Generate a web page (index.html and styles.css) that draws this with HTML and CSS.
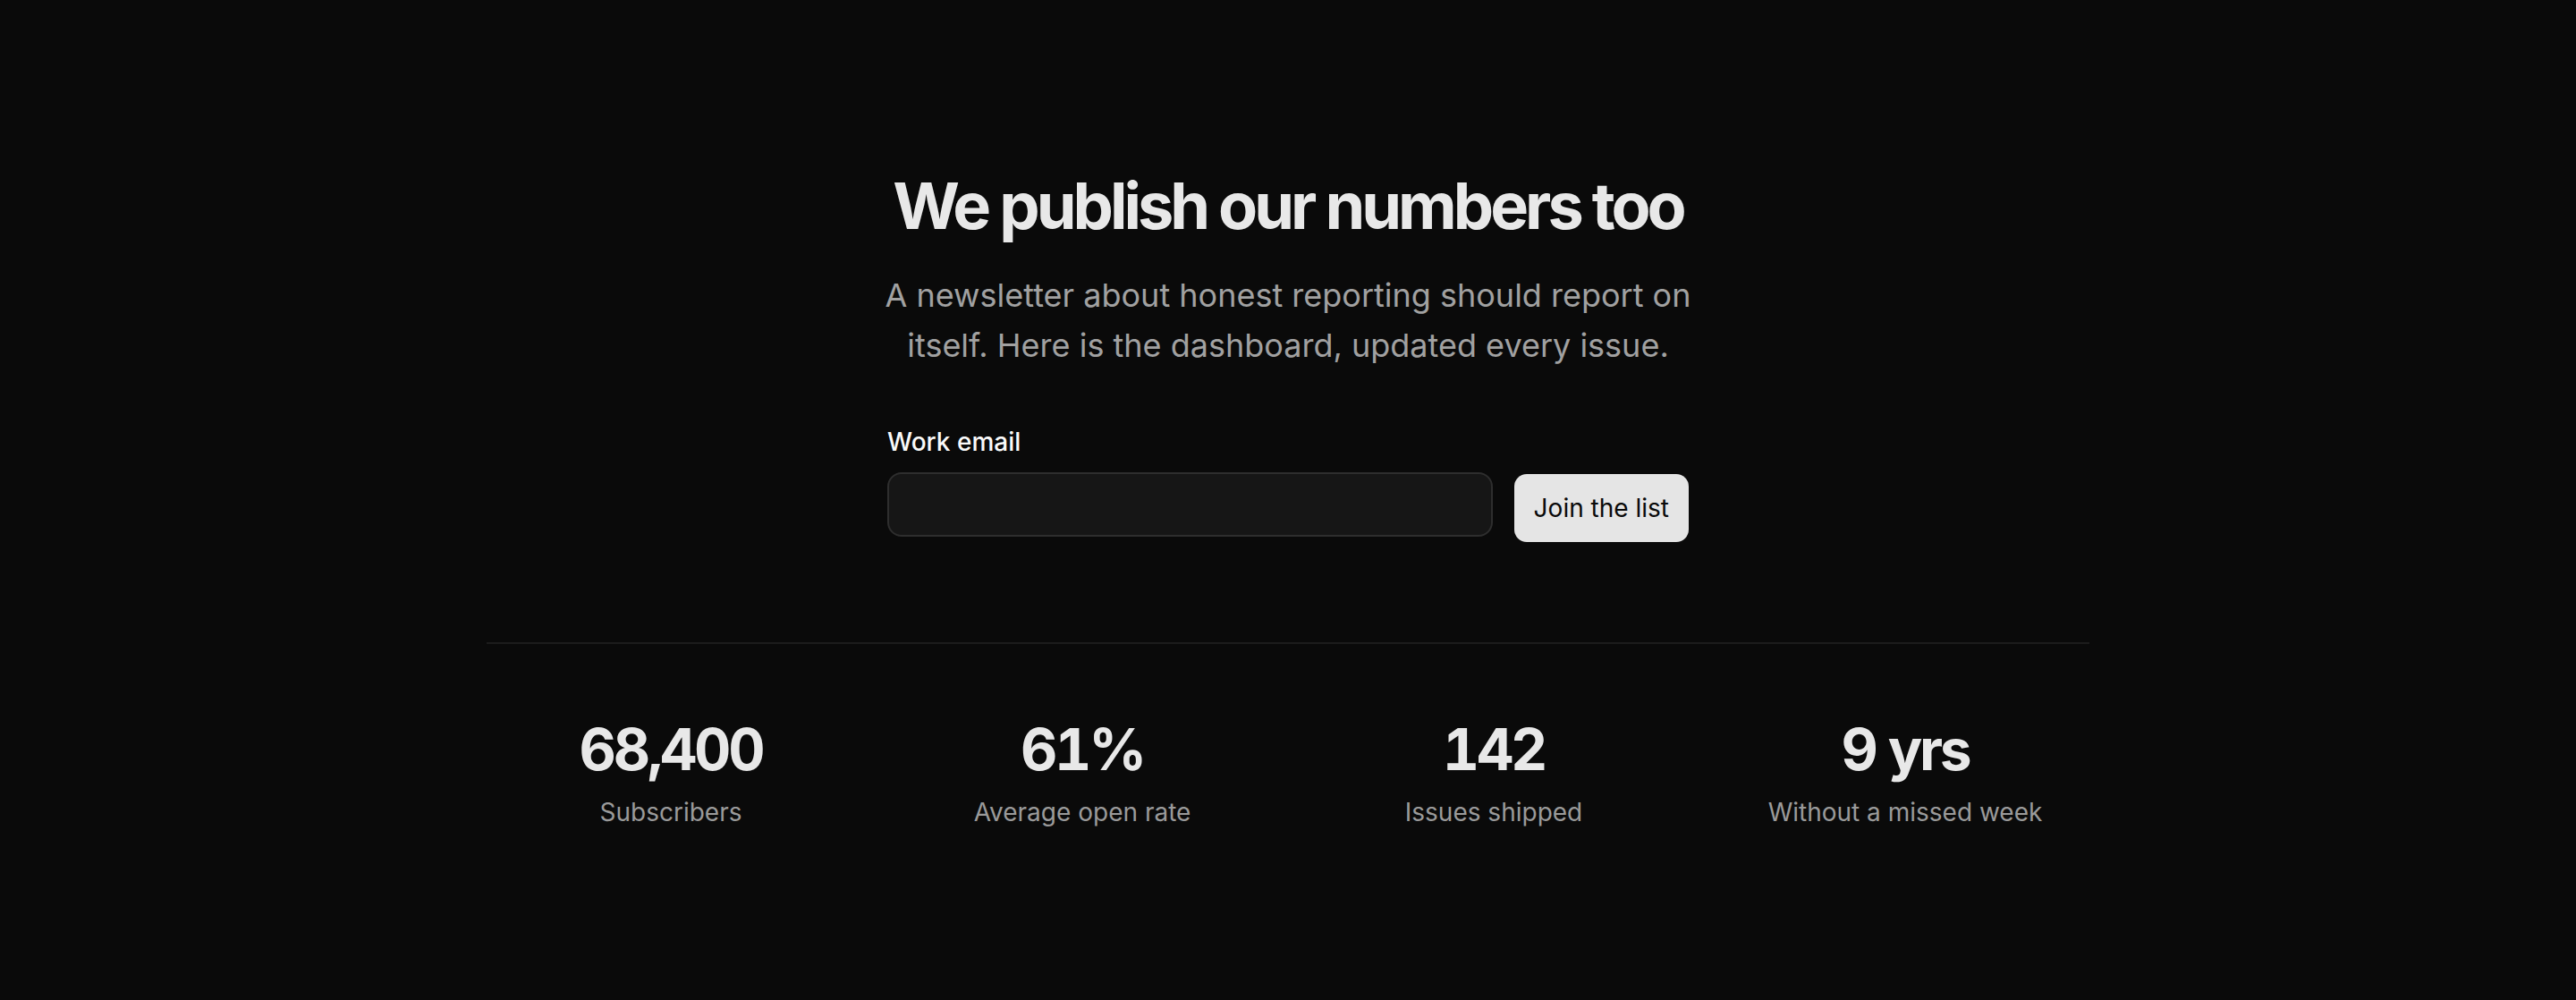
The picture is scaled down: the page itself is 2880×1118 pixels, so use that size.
FILE: index.html
```html
<!DOCTYPE html>
<html lang="en">
<head>
    <meta charset="UTF-8">
    <meta name="viewport" content="width=device-width, initial-scale=1.0">
    <title>We publish our numbers too</title>
    <link rel="stylesheet" href="styles.css">
</head>
<body>

    <main class="page">
        <section class="hero">
            <h1 class="hero-title">We publish our numbers too</h1>
            <p class="hero-text">A newsletter about honest reporting should report on itself. Here is the dashboard, updated every issue.</p>

            <form class="signup" onsubmit="return false;">
                <label class="signup-label" for="email">Work email</label>
                <div class="signup-row">
                    <input class="signup-input" id="email" type="email">
                    <button class="signup-button" type="submit">Join the list</button>
                </div>
            </form>
        </section>

        <section class="stats">
            <div class="stat">
                <div class="stat-value">68,400</div>
                <div class="stat-label">Subscribers</div>
            </div>
            <div class="stat">
                <div class="stat-value">61%</div>
                <div class="stat-label">Average open rate</div>
            </div>
            <div class="stat">
                <div class="stat-value">142</div>
                <div class="stat-label">Issues shipped</div>
            </div>
            <div class="stat">
                <div class="stat-value">9 yrs</div>
                <div class="stat-label">Without a missed week</div>
            </div>
        </section>
    </main>

</body>
</html>
```

FILE: styles.css
```css
body {
    margin: 0;
    background-color: #0a0a0a;
    color: #e8e8e8;
    font-family: 'Inter', 'Noto Sans', sans-serif;
}

.page {
    max-width: 1792px;
    margin: 0 auto;
    padding-top: 190px;
}

.hero {
    max-width: 960px;
    margin: 0 auto;
    text-align: center;
}

.hero-title {
    margin: 0;
    font-size: 72px;
    line-height: 80px;
    font-weight: 700;
    letter-spacing: -4px;
    white-space: nowrap;
    color: #e8e8e8;
}

.hero-text {
    margin: 32px 0 0;
    font-size: 36px;
    line-height: 56px;
    color: #a1a1a1;
}

.signup {
    max-width: 896px;
    margin: 60px auto 0;
    text-align: left;
}

.signup-label {
    display: block;
    margin-bottom: 14px;
    font-size: 28px;
    line-height: 40px;
    font-weight: 500;
    color: #fafafa;
}

.signup-row {
    display: flex;
    align-items: flex-start;
    gap: 24px;
}

.signup-input {
    flex: 1;
    height: 72px;
    box-sizing: border-box;
    padding: 0 24px;
    border: 2px solid #2e2e2e;
    border-radius: 16px;
    background-color: #161616;
    color: #fafafa;
    font-family: inherit;
    font-size: 28px;
    outline: none;
}

.signup-button {
    height: 76px;
    margin-top: 2px;
    padding: 0 22px;
    border: none;
    border-radius: 14px;
    background-color: #e5e5e5;
    color: #0a0a0a;
    font-family: inherit;
    font-size: 28px;
    cursor: pointer;
}

.stats {
    display: grid;
    grid-template-columns: repeat(4, 1fr);
    gap: 48px;
    margin-top: 112px;
    padding-top: 80px;
    border-top: 2px solid #1c1c1c;
    text-align: center;
}

.stat-value {
    font-size: 64px;
    line-height: 76px;
    font-weight: 700;
    letter-spacing: -3.2px;
    font-variant-numeric: tabular-nums;
    color: #e8e8e8;
}

.stat-label {
    margin-top: 12px;
    font-size: 28px;
    line-height: 40px;
    color: #9a9a9a;
}
```
